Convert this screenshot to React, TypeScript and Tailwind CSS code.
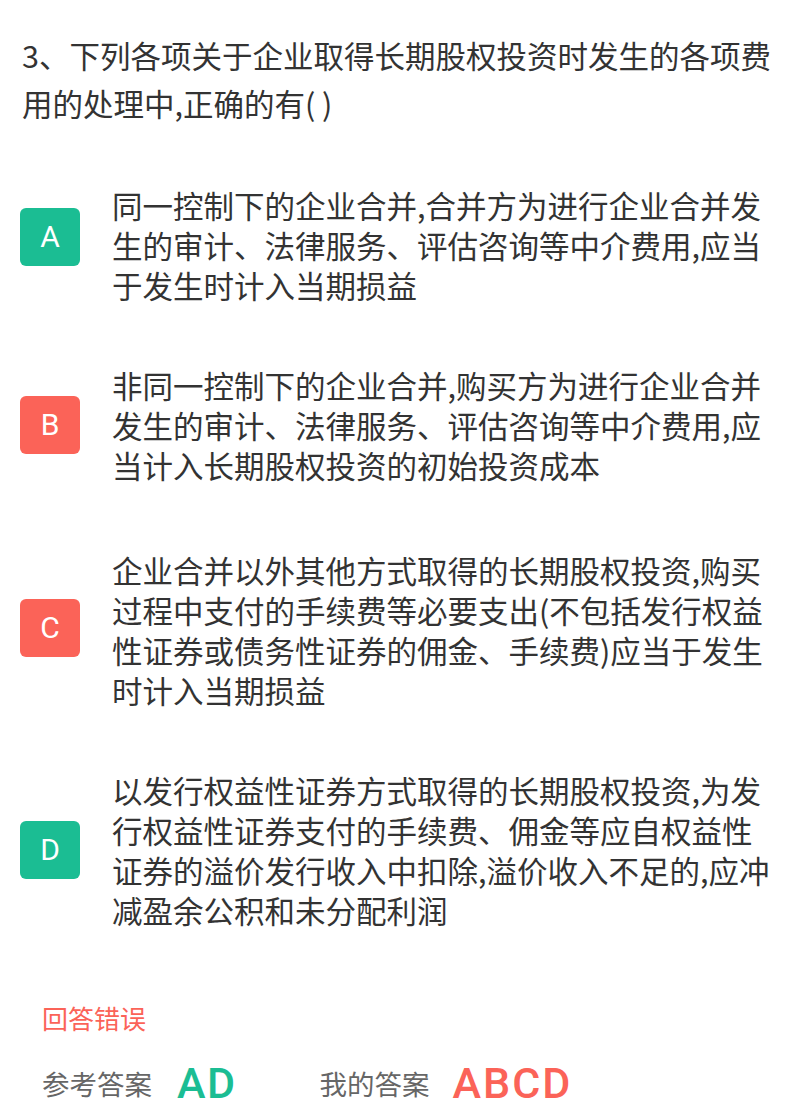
import React from "react";

const GREEN = "bg-[#1bbd93]";
const RED = "bg-[#fb6358]";

const options: { key: string; color: string; lines: string[]; mt: string; badge: string }[] = [
  {
    key: "A",
    color: GREEN,
    mt: "mt-0",
    badge: "mb-[16px]",
    lines: [
      "同一控制下的企业合并,合并方为进行企业合并发",
      "生的审计、法律服务、评估咨询等中介费用,应当",
      "于发生时计入当期损益",
    ],
  },
  {
    key: "B",
    color: RED,
    mt: "mt-[60px]",
    badge: "",
    lines: [
      "非同一控制下的企业合并,购买方为进行企业合并",
      "发生的审计、法律服务、评估咨询等中介费用,应",
      "当计入长期股权投资的初始投资成本",
    ],
  },
  {
    key: "C",
    color: RED,
    mt: "mt-[65px]",
    badge: "mb-[4px]",
    lines: [
      "企业合并以外其他方式取得的长期股权投资,购买",
      "过程中支付的手续费等必要支出(不包括发行权益",
      "性证券或债务性证券的佣金、手续费)应当于发生",
      "时计入当期损益",
    ],
  },
  {
    key: "D",
    color: GREEN,
    mt: "mt-[60px]",
    badge: "",
    lines: [
      "以发行权益性证券方式取得的长期股权投资,为发",
      "行权益性证券支付的手续费、佣金等应自权益性",
      "证券的溢价发行收入中扣除,溢价收入不足的,应冲",
      "减盈余公积和未分配利润",
    ],
  },
];

export default function App() {
  return (
    <div
      className="w-[800px] h-[1120px] bg-white overflow-hidden"
      style={{ fontFamily: '"Noto Sans CJK SC", "Noto Sans", sans-serif' }}
    >
      <div className="pl-[22px] pt-[31px] text-[30.5px] leading-[48px] text-[#333333] whitespace-nowrap">
        <div>3、下列各项关于企业取得长期股权投资时发生的各项费</div>
        <div>用的处理中,正确的有( )</div>
      </div>

      <div className="mt-[58px] flex flex-col">
        {options.map((o) => (
          <div key={o.key} className={`flex items-center ${o.mt}`}>
            <div
              className={`ml-[20px] w-[60px] h-[58px] rounded-[6px] ${o.color} ${o.badge} flex items-center justify-center text-white text-[30px] leading-none font-normal shrink-0`}
              style={{ fontFamily: 'Roboto, "Noto Sans", sans-serif' }}
            >
              {o.key}
            </div>
            <div className="ml-[32px] text-[30.5px] leading-[40px] text-[#333333] whitespace-nowrap">
              {o.lines.map((l, i) => (
                <div key={i}>{l}</div>
              ))}
            </div>
          </div>
        ))}
      </div>

      <div className="pl-[42px] mt-[68px] text-[26px] leading-[40px] text-[#fb6358]">回答错误</div>

      <div className="pl-[42px] mt-[18px] flex items-center h-[54px]">
        <span className="text-[27.5px] leading-[40px] text-[#666666]">参考答案</span>
        <span
          className="ml-[25px] text-[43px] leading-[54px] font-medium tracking-[1.5px] text-[#1bbd93]"
          style={{ fontFamily: 'Roboto, "Noto Sans", sans-serif' }}
        >
          AD
        </span>
        <span className="ml-[83px] text-[27.5px] leading-[40px] text-[#666666]">我的答案</span>
        <span
          className="ml-[23px] text-[43px] leading-[54px] font-medium tracking-[2px] text-[#fb6358]"
          style={{ fontFamily: 'Roboto, "Noto Sans", sans-serif' }}
        >
          ABCD
        </span>
      </div>
    </div>
  );
}
